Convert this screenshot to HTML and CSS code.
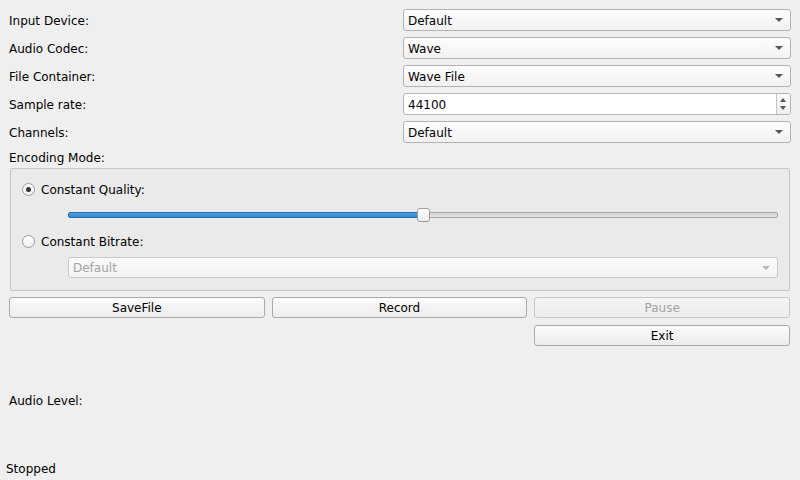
FILE: index.html
```html
<!DOCTYPE html>
<html>
<head>
<meta charset="utf-8">
<link rel="stylesheet" href="styles.css">
</head>
<body>
<div class="main">
  <div class="form">
    <div class="label">Input Device:</div>
    <div class="combo"><span class="combo-text">Default</span><span class="arrow"></span></div>
    <div class="label">Audio Codec:</div>
    <div class="combo"><span class="combo-text">Wave</span><span class="arrow"></span></div>
    <div class="label">File Container:</div>
    <div class="combo"><span class="combo-text">Wave File</span><span class="arrow"></span></div>
    <div class="label">Sample rate:</div>
    <div class="spin"><span class="spin-text">44100</span><span class="spin-btns"><span class="up"></span><span class="down"></span></span></div>
    <div class="label">Channels:</div>
    <div class="combo"><span class="combo-text">Default</span><span class="arrow"></span></div>
    <div class="enc-label">Encoding Mode:</div>
    <div class="group">
      <div class="radio-row"><span class="radio checked"></span><span class="radio-text">Constant Quality:</span></div>
      <div class="slider-row">
        <div class="slider">
          <div class="groove"></div>
          <div class="fill"></div>
          <div class="handle"></div>
        </div>
      </div>
      <div class="radio-row"><span class="radio"></span><span class="radio-text">Constant Bitrate:</span></div>
      <div class="combo disabled indented"><span class="combo-text">Default</span><span class="arrow"></span></div>
    </div>
  </div>
  <div class="buttons">
    <div class="btn">SaveFile</div>
    <div class="btn">Record</div>
    <div class="btn disabled">Pause</div>
    <div class="spacer"></div>
    <div class="spacer"></div>
    <div class="btn">Exit</div>
  </div>
  <div class="level-row">Audio Level:</div>
</div>
<div class="statusbar">Stopped</div>
</body>
</html>
```
FILE: styles.css
```css
* { box-sizing: border-box; }
html, body { margin: 0; padding: 0; }
body {
  width: 800px;
  height: 480px;
  overflow: hidden;
  background: #efefef;
  font-family: "DejaVu Sans", sans-serif;
  font-size: 12px;
  color: #000;
  display: flex;
  flex-direction: column;
}
.main {
  flex: 1;
  padding: 9px;
  display: flex;
  flex-direction: column;
  gap: 6px;
}
.form {
  display: grid;
  grid-template-columns: 1fr 1fr;
  column-gap: 6px;
  row-gap: 6px;
}
.label {
  height: 22px;
  line-height: 24px;
  white-space: nowrap;
}
.combo {
  position: relative;
  height: 22px;
  border: 1px solid #b3b3b3;
  border-radius: 3px;
  background: linear-gradient(#fdfdfd, #f1f1f1);
  padding-left: 4px;
  line-height: 22px;
}
.arrow {
  position: absolute;
  right: 7px;
  top: 8px;
  width: 0;
  height: 0;
  border-left: 4px solid transparent;
  border-right: 4px solid transparent;
  border-top: 4px solid #555;
}
.combo.disabled {
  height: 21px;
  line-height: 21px;
  border-color: #c9c9c9;
  color: #a3a3a3;
  background: linear-gradient(#fafafa, #f3f3f3);
}
.combo.disabled .arrow { border-top-color: #b5b5b5; }
.indented { margin-left: 46px; }
.spin {
  position: relative;
  height: 22px;
  border: 1px solid #b3b3b3;
  border-radius: 3px;
  background: #fff;
  padding-left: 4px;
  line-height: 22px;
}
.spin-btns {
  position: absolute;
  right: 0;
  top: 0;
  bottom: 0;
  width: 14px;
  border-left: 1px solid #c4c4c4;
  background: linear-gradient(#fbfbfb, #eeeeee);
  border-radius: 0 2px 2px 0;
}
.up, .down {
  position: absolute;
  left: 3px;
  width: 0;
  height: 0;
  border-left: 3.5px solid transparent;
  border-right: 3.5px solid transparent;
}
.up { top: 4px; border-bottom: 4px solid #555; }
.down { top: 12px; border-top: 4px solid #555; }
.enc-label {
  grid-column: 1 / 3;
  height: 13px;
  line-height: 18px;
  white-space: nowrap;
}
.group {
  grid-column: 1 / 3;
  margin: 0 1px;
  border: 1px solid #c6c6c6;
  border-radius: 2px;
  background: #eaeaea;
  padding: 10px 11px 11px 11px;
  display: flex;
  flex-direction: column;
  gap: 6px;
  height: 123px;
}
.radio-row {
  height: 20px;
  display: flex;
  align-items: center;
  gap: 6px;
}
.radio-text { position: relative; top: 0.5px; }
.radio {
  width: 13px;
  height: 13px;
  border: 1px solid #9a9a9a;
  border-radius: 50%;
  background: linear-gradient(#ffffff, #f0f0f0);
  position: relative;
  flex: none;
}
.radio.checked::after {
  content: "";
  position: absolute;
  left: 3px;
  top: 3px;
  width: 5px;
  height: 5px;
  border-radius: 50%;
  background: #333;
}
.slider-row {
  height: 20px;
  padding-left: 46px;
  display: flex;
  align-items: center;
}
.slider {
  position: relative;
  flex: 1;
  height: 14px;
}
.groove {
  position: absolute;
  left: 0;
  right: 0;
  top: 4px;
  height: 6px;
  border: 1px solid #a9a9a9;
  border-radius: 2px;
  background: linear-gradient(#d4d4d4, #e2e2e2);
}
.fill {
  position: absolute;
  left: 0;
  top: 4px;
  height: 6px;
  width: calc((100% - 13px) * 0.5 + 2px);
  border: 1px solid #2b6ca3;
  border-radius: 2px 0 0 2px;
  background: linear-gradient(#4aa0e6, #2f86d2);
}
.handle {
  position: absolute;
  top: 0;
  left: calc((100% - 13px) * 0.5);
  width: 13px;
  height: 14px;
  border: 1px solid #9c9c9c;
  border-radius: 3px;
  background: linear-gradient(#ffffff, #ededed);
}
.buttons {
  display: grid;
  grid-template-columns: 1fr 1fr 1fr;
  column-gap: 6px;
  row-gap: 7px;
}
.btn {
  height: 21px;
  margin-right: 1px;
  border: 1px solid #a9a9a9;
  border-radius: 3px;
  background: linear-gradient(#fbfbfb, #ececec);
  text-align: center;
  line-height: 21px;
}
.btn.disabled {
  border-color: #c8c8c8;
  color: #a3a3a3;
  background: linear-gradient(#f4f4f4, #ededed);
}
.level-row {
  flex: 1;
  display: flex;
  align-items: center;
}
.statusbar {
  height: 22px;
  line-height: 22px;
  padding-left: 6px;
}
```
